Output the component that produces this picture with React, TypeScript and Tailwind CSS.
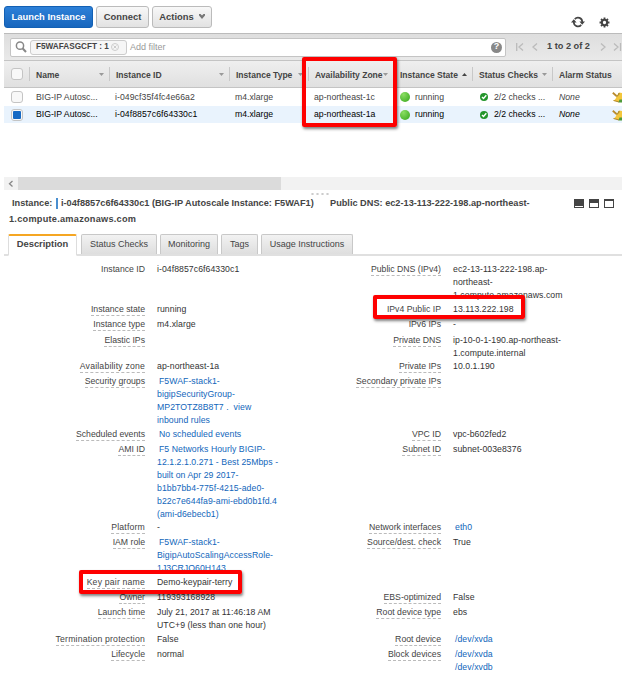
import React from 'react';
import clsx from 'clsx';

type Column = {
  label: string;
  sort?: 'asc' | 'none';
};

type Instance = {
  id: string;
  zone: string;
  selected: boolean;
};

type DetailRow = {
  height: string;
  left?: Detail;
  right?: Detail;
};

type Detail = {
  label: string;
  plain?: boolean;
  wide?: boolean;
  lines?: string[];
  link?: boolean;
};

const columns: Column[] = [
  { label: 'Name', sort: 'none' },
  { label: 'Instance ID', sort: 'none' },
  { label: 'Instance Type', sort: 'none' },
  { label: 'Availability Zone', sort: 'none' },
  { label: 'Instance State', sort: 'asc' },
  { label: 'Status Checks', sort: 'none' },
  { label: 'Alarm Status' },
];

const instances: Instance[] = [
  { id: 'i-049cf35f4fc4e66a2', zone: 'ap-northeast-1c', selected: false },
  { id: 'i-04f8857c6f64330c1', zone: 'ap-northeast-1a', selected: true },
];

const tabs = ['Description', 'Status Checks', 'Monitoring', 'Tags', 'Usage Instructions'];

const details: DetailRow[] = [
  {
    height: 'h-[40px]',
    left: { label: 'Instance ID', plain: true, lines: ['i-04f8857c6f64330c1'] },
    right: { label: 'Public DNS (IPv4)', lines: ['ec2-13-113-222-198.ap-', 'northeast-', '1.compute.amazonaws.com'] },
  },
  {
    height: 'h-[15px]',
    left: { label: 'Instance state', lines: ['running'] },
    right: { label: 'IPv4 Public IP', lines: ['13.113.222.198'] },
  },
  {
    height: 'h-[15.5px]',
    left: { label: 'Instance type', lines: ['m4.xlarge'] },
    right: { label: 'IPv6 IPs', plain: true, lines: ['-'] },
  },
  {
    height: 'h-[26.5px]',
    left: { label: 'Elastic IPs' },
    right: { label: 'Private DNS', lines: ['ip-10-0-1-190.ap-northeast-', '1.compute.internal'] },
  },
  {
    height: 'h-[15px]',
    left: { label: 'Availability zone', wide: true, lines: ['ap-northeast-1a'] },
    right: { label: 'Private IPs', lines: ['10.0.1.190'] },
  },
  {
    height: 'h-[52.5px]',
    left: { label: 'Security groups', link: true, lines: ['F5WAF-stack1-', 'bigipSecurityGroup-', 'MP2TOTZ8B8T7 .  view', 'inbound rules'] },
    right: { label: 'Secondary private IPs' },
  },
  {
    height: 'h-[15px]',
    left: { label: 'Scheduled events', link: true, lines: ['No scheduled events'] },
    right: { label: 'VPC ID', lines: ['vpc-b602fed2'] },
  },
  {
    height: 'h-[78.5px]',
    left: {
      label: 'AMI ID',
      link: true,
      lines: [
        'F5 Networks Hourly BIGIP-',
        '12.1.2.1.0.271 - Best 25Mbps -',
        'built on Apr 29 2017-',
        'b1bb7bb4-775f-4215-ade0-',
        'b22c7e644fa9-ami-ebd0b1fd.4',
        '(ami-d6ebecb1)',
      ],
    },
    right: { label: 'Subnet ID', lines: ['subnet-003e8376'] },
  },
  {
    height: 'h-[15px]',
    left: { label: 'Platform', wide: true, lines: ['-'] },
    right: { label: 'Network interfaces', link: true, lines: ['eth0'] },
  },
  {
    height: 'h-[40px]',
    left: { label: 'IAM role', link: true, lines: ['F5WAF-stack1-', 'BigipAutoScalingAccessRole-', '1J3CRJQ60H143'] },
    right: { label: 'Source/dest. check', lines: ['True'] },
  },
  {
    height: 'h-[15px]',
    left: { label: 'Key pair name', wide: true, lines: ['Demo-keypair-terry'] },
  },
  {
    height: 'h-[15px]',
    left: { label: 'Owner', lines: ['119393168928'] },
    right: { label: 'EBS-optimized', lines: ['False'] },
  },
  {
    height: 'h-[26.5px]',
    left: { label: 'Launch time', lines: ['July 21, 2017 at 11:46:18 AM', 'UTC+9 (less than one hour)'] },
    right: { label: 'Root device type', lines: ['ebs'] },
  },
  {
    height: 'h-[15.5px]',
    left: { label: 'Termination protection', wide: true, lines: ['False'] },
    right: { label: 'Root device', link: true, lines: ['/dev/xvda'] },
  },
  {
    height: 'h-[26px]',
    left: { label: 'Lifecycle', lines: ['normal'] },
    right: { label: 'Block devices', link: true, lines: ['/dev/xvda', '/dev/xvdb'] },
  },
];

const gridColumns = 'grid grid-cols-[25px_80px_120px_79px_85px_79px_80px_1fr]';

const RefreshIcon = () => (
  <svg viewBox="0 0 14 12" className="h-3 w-3.5" fill="none" stroke="#444" strokeWidth="1.7">
    <path d="M3.8 3.1A4.2 4.2 0 0 1 11.2 6M10.2 8.9A4.2 4.2 0 0 1 2.8 6" />
    <path d="M8.4 5.6H14L11.2 8.8ZM0 6.4H5.6L2.8 3.2Z" fill="#444" stroke="none" />
  </svg>
);

const GearIcon = () => (
  <svg viewBox="0 0 12 12" className="size-[11px]" fill="none" stroke="#444">
    <circle cx="6" cy="6" r="2.9" strokeWidth="2.2" />
    <path d="M6 .6V2.6M6 9.4V11.4M.6 6H2.6M9.4 6H11.4M2.2 2.2L3.5 3.5M8.5 8.5L9.8 9.8M9.8 2.2L8.5 3.5M3.5 8.5L2.2 9.8" strokeWidth="2" />
  </svg>
);

const BroomIcon = () => (
  <svg viewBox="0 0 10 12" className="h-3 w-2.5 shrink-0">
    <path d="M.8 1.8L4.5 5" stroke="#b98a2c" strokeWidth="1.8" />
    <path d="M7 1.5L10 2V11H7L1.5 9.5C3.5 8.5 4.2 7 4.5 5Z" fill="#f3c63c" />
    <path d="M1.5 9.5L7 11" stroke="#a87c1c" strokeWidth=".9" />
    <path d="M4.2 5.2C6 5 7 4 7 2" fill="none" stroke="#8f7430" strokeWidth="1" />
    <path d="M7.5 8.5H10V11.5H6.5Z" fill="#4f9a3a" />
  </svg>
);

const SortArrow = ({ sort }: { sort: 'asc' | 'none' }) => (
  <svg viewBox="0 0 5 3" className="mr-[5px] ml-auto h-[3px] w-[5px] shrink-0">
    <path d={sort === 'asc' ? 'M0 3L2.5 0L5 3Z' : 'M0 0H5L2.5 3Z'} fill={sort === 'asc' ? '#444' : '#999'} />
  </svg>
);

const Checkbox = ({ checked = false }: { checked?: boolean }) => (
  <span className="ml-[7px] flex size-[12px] items-center justify-center rounded-[3px] border border-[#c4c4c4] bg-[#f8f8f8]">
    {checked && <span className="size-[8px] rounded-[1px] bg-[#1569c4]" />}
  </span>
);

const DetailCell = ({ detail, side }: { detail?: Detail; side: 'left' | 'right' }) => (
  <div className={clsx('grid gap-x-3', side === 'left' ? 'grid-cols-[141px_1fr]' : 'grid-cols-[101px_1fr]')}>
    <div className="text-right">
      {detail && (
        <span
          className={clsx(
            'inline-block h-[13px] whitespace-nowrap',
            !detail.plain && 'border-b border-dashed border-[#bbb]',
            detail.wide && 'tracking-[0.18px]',
          )}
        >
          {detail.label}
        </span>
      )}
    </div>
    <div className={clsx('tracking-[0.06px] whitespace-pre', detail?.link ? 'text-[#1166bb]' : 'text-[#333]')}>
      {detail?.lines?.map((line, i) => (
        <div key={line} className={clsx('h-[13px]', detail.link && (i === 0 || side === 'right') && 'pl-[2px]')}>{line}</div>
      ))}
    </div>
  </div>
);

export default function App() {
  return (
    <div className="relative h-[681px] w-[622px] overflow-hidden bg-white pl-1 font-['Liberation_Sans',Arial,sans-serif] text-[8.7px] text-[#444]">
      {/* Actions */}
      <div className="flex h-[33px] items-start gap-[3px] pt-1.5 text-[9.4px] font-bold">
        <button className="h-[22px] w-[89px] rounded-[3px] border border-[#1260b4] bg-gradient-to-b from-[#2c80d8] to-[#1766bd] text-white">Launch Instance</button>
        <button className="h-[22px] w-[53px] rounded-[3px] border border-[#bbb] bg-gradient-to-b from-[#f8f8f8] to-[#e2e2e2]">Connect</button>
        <button className="flex h-[22px] w-[60px] items-center justify-center gap-[5px] rounded-[3px] border border-[#bbb] bg-gradient-to-b from-[#f8f8f8] to-[#e2e2e2]">
          Actions
          <svg viewBox="0 0 6 5" className="mb-px h-[5px] w-1.5"><path d="M0 0H1.5L3 1.5L4.5 0H6V1.5L3 5L0 1.5Z" fill="#777" /></svg>
        </button>
        <div className="mt-[10px] mr-[12px] ml-auto flex items-center gap-[14px]">
          <RefreshIcon />
          <GearIcon />
        </div>
      </div>

      {/* Filter bar */}
      <div className="flex h-[27px] items-center border-t border-[#bbb] bg-gradient-to-b from-[#dedede] to-[#e9e9e9]">
        <div className="ml-1.5 flex h-[19px] w-[496px] items-center rounded-[2px] border border-[#c4c4c4] bg-white">
          <svg viewBox="0 0 12 12" className="ml-1 size-3" fill="none" stroke="#888" strokeWidth="1.5">
            <circle cx="5" cy="4.7" r="3.6" />
            <path d="M7.5 7.3L11 11" strokeWidth="2" />
          </svg>
          <span className="ml-[3px] flex h-[15px] w-[97px] items-center rounded-[3px] border border-[#ccc] bg-[#f6f6f6] pl-[5px] text-[8.2px] font-bold whitespace-nowrap">
            <span className="w-[75px] pt-px">F5WAFASGCFT : 1</span>
            <svg viewBox="0 0 8 8" className="size-2 shrink-0" fill="none" stroke="#ccc">
              <circle cx="4" cy="4" r="3.5" />
              <path d="M2.5 2.5L5.5 5.5M5.5 2.5L2.5 5.5" />
            </svg>
          </span>
          <span className="ml-[3px] pt-[2px] text-[9px] text-[#999]">Add filter</span>
          <span className="mr-[3px] ml-auto flex size-[11px] items-center justify-center rounded-full bg-[#888] text-[9px] font-bold text-white">?</span>
        </div>
        <svg viewBox="0 0 22 8" className="ml-[10px] h-2 w-[22px]" fill="none" stroke="#bbb" strokeWidth="1.3">
          <path d="M.7 0V8M7 .5L3 4L7 7.5M21 .5L17 4L21 7.5" />
        </svg>
        <span className="ml-[9px] w-[43px] text-[9.2px] font-bold whitespace-nowrap">1 to 2 of 2</span>
        <svg viewBox="0 0 22 8" className="ml-[10px] h-2 w-[22px] shrink-0" fill="none" stroke="#bbb" strokeWidth="1.3">
          <path d="M1 .5L5 4L1 7.5M14 .5L18 4L14 7.5M20.5 0V8" />
        </svg>
      </div>

      {/* Instance table */}
      <div className={clsx(gridColumns, 'h-7 items-center border-y border-[#c4c4c4] bg-gradient-to-b from-[#efefef] to-[#e0e0e0] text-[8.55px] font-bold')}>
        <Checkbox />
        {columns.map(column => (
          <div key={column.label} className="flex h-[14px] items-center border-l border-[#c8c8c8] pl-[6px] whitespace-nowrap">
            <span className="pt-[2px]">{column.label}</span>
            {column.sort && <SortArrow sort={column.sort} />}
          </div>
        ))}
      </div>
      {instances.map(instance => (
        <div
          key={instance.id}
          className={clsx(gridColumns, 'h-[17.5px] items-center pt-px whitespace-nowrap', instance.selected ? 'bg-[#e9f3fd] text-black' : 'text-[#444]')}
        >
          <Checkbox checked={instance.selected} />
          <span className="pl-[7px]">BIG-IP Autosc...</span>
          <span className="pl-[6px] tracking-[0.06px]">{instance.id}</span>
          <span className="pl-[6px]">m4.xlarge</span>
          <span className="pl-[6px]">{instance.zone}</span>
          <span className="flex items-center gap-[5px] pl-[7px]">
            <i className="size-[10px] rounded-full bg-radial-[at_35%_25%] from-[#8ade62] to-[#35a51b]" />
            running
          </span>
          <span className="flex items-center gap-[6px] pl-[8px]">
            <svg viewBox="0 0 8 8" className="size-2">
              <circle cx="4" cy="4" r="4" fill="#23952b" />
              <path d="M2 4L3.5 5.5L6.3 2.3" fill="none" stroke="white" strokeWidth="1.4" />
            </svg>
            2/2 checks ...
          </span>
          <span className="flex items-center justify-between pl-[7px]">
            <em>None</em>
            <BroomIcon />
          </span>
        </div>
      ))}

      {/* Horizontal scrollbar */}
      <div className="mt-[54px] flex h-[13px] bg-[#f2f2f2]">
        <svg viewBox="0 0 14 13" className="h-[13px] w-[14px]" fill="none" stroke="#888">
          <path d="M8.5 4L5.5 6.7L8.5 9.4" strokeWidth="1.3" />
        </svg>
        <div className="w-[263px] bg-[#dbdbdb]" />
      </div>
      <div className="ml-[307px] flex h-[5px] items-center gap-[2px] pt-0.5">
        {[0, 1, 2, 3].map(dot => <i key={dot} className="h-[2px] w-[3px] rounded-full border border-[#ccc]" />)}
      </div>

      {/* Selected instance heading */}
      <div className="flex h-[39px] justify-between pr-[8px] pl-[5px] text-[9.2px] leading-4 font-bold">
        <div className="whitespace-pre">
          <div className="flex items-center pl-[3px]">
            <span className="w-[44px]">Instance:</span>
            <i className="mr-[3px] h-[11px] w-[2px] bg-[#4a8fd0]" />
            <span className="w-[269px]">i-04f8857c6f64330c1 (BIG-IP Autoscale Instance: F5WAF1)</span>
            <span>Public DNS: ec2-13-113-222-198.ap-northeast-</span>
          </div>
          <div className="tracking-[0.25px]">1.compute.amazonaws.com</div>
        </div>
        <div className="flex gap-[5px] pt-1">
          <i className="h-[9px] w-[10px] border border-[#444] border-t-[7px]" />
          <i className="h-[9px] w-[10px] border border-[#444] border-t-[4px]" />
          <i className="h-[9px] w-[10px] border border-[#444] border-t-2" />
        </div>
      </div>

      {/* Tabs */}
      <div className="flex h-[22px] gap-[3px] border-b-2 border-[#e0e0e0] pl-1 text-[9px]">
        {tabs.map((tab, i) => (
          <div
            key={tab}
            className={clsx(
              'flex items-center justify-center rounded-t-[2px] border whitespace-nowrap',
              i === 0 ? '-mb-0.5 mr-px w-[69px] border-t-2 border-[#ddd] border-t-[#f5a623] border-b-white bg-white pb-0.5 text-[9.4px] font-bold' : 'border-[#c8c8c8] border-b-0 bg-gradient-to-b from-[#f2f2f2] to-[#dedede] pt-px',
              i === 1 && 'w-[76px]',
              i === 2 && 'w-[58px]',
              i === 3 && 'w-[37px]',
              i === 4 && 'w-[92px]',
            )}
          >
            {tab}
          </div>
        ))}
      </div>

      {/* Description */}
      <div className="pt-[7px] leading-[13px]">
        {details.map(row => (
          <div key={row.left?.label} className={clsx('grid grid-cols-[292px_1fr]', row.height)}>
            <DetailCell detail={row.left} side="left" />
            <div className="pl-11">
              <DetailCell detail={row.right} side="right" />
            </div>
          </div>
        ))}
      </div>

      {/* Highlights */}
      <div className="absolute top-[57px] left-[302px] h-[70px] w-[95px] rounded-[2px] border-4 border-[#fe0000] shadow-[1px_2px_3px_rgba(0,0,0,.5)]" />
      <div className="absolute top-[295px] left-[373px] h-6 w-[152px] rounded-[2px] border-4 border-[#fe0000] shadow-[1px_2px_3px_rgba(0,0,0,.5)]" />
      <div className="absolute top-[570px] left-[79px] h-6 w-[163px] rounded-[2px] border-4 border-[#fe0000] shadow-[1px_2px_3px_rgba(0,0,0,.5)]" />
    </div>
  );
}
